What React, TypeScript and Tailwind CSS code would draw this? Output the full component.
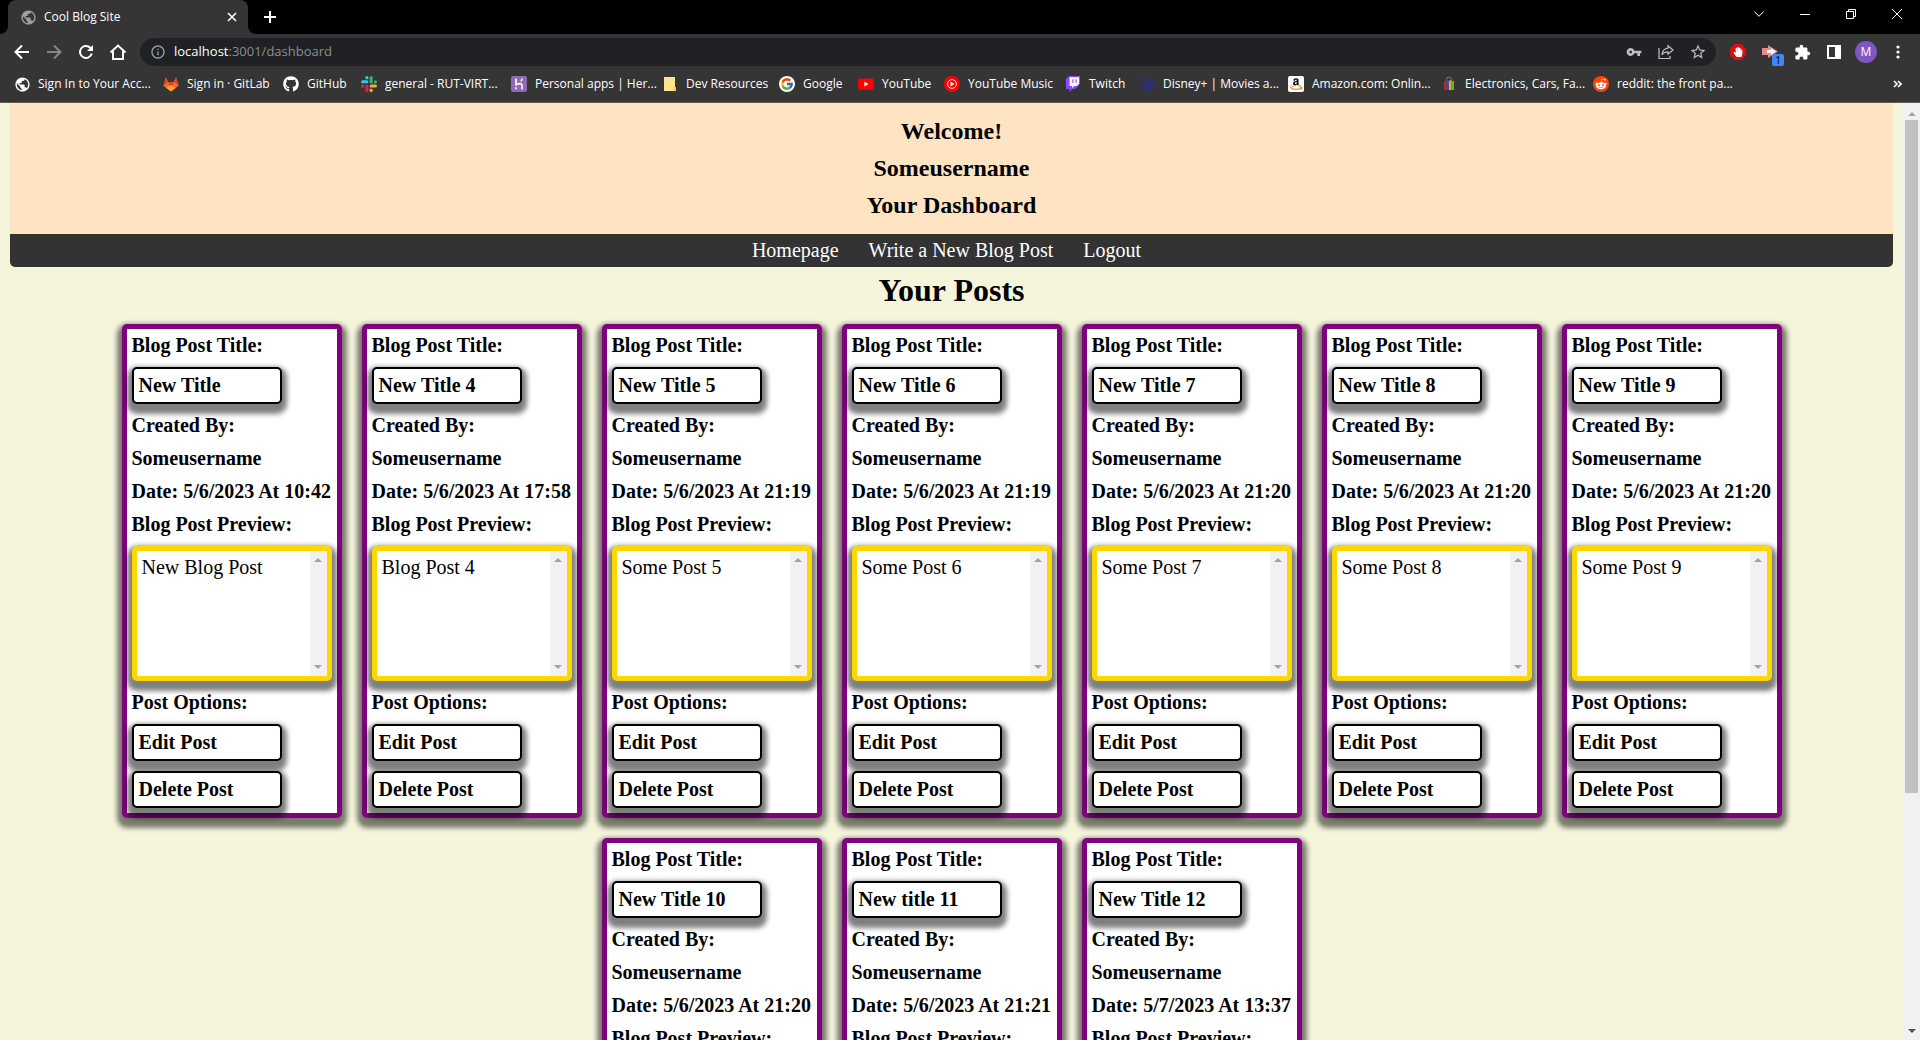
import React from "react";
import { FcGoogle } from "react-icons/fc";
import { FaAmazon, FaGithub, FaRedditAlien, FaHandPaper } from "react-icons/fa";
import {
  MdPublic,
  MdInfoOutline,
  MdVpnKey,
  MdStarBorder,
  MdExtension,
} from "react-icons/md";

const SHADOW = "shadow-[0_5px_5px_5px_rgba(0,0,0,0.5)]";
const SLOT = "flex size-4 shrink-0 items-center justify-center";

function GitLabIcon() {
  return (
    <svg viewBox="0 0 16 16" className="size-4" aria-hidden="true">
      <path d="M8 15.4 0.4 9.8 3 1.2 5.2 6h5.6L13 1.2l2.6 8.6z" fill="#fc6d26" />
      <path d="M8 15.4 5.2 6h5.6z" fill="#e24329" />
      <path d="M3 1.2 0.8 8 0.4 9.8 5.2 6zM13 1.2 15.2 8l.4 1.8L10.8 6z" fill="#e24329" />
      <path d="M8 15.4 3.4 12 8 9l4.6 3z" fill="#fca326" />
    </svg>
  );
}

function SlackIcon() {
  return (
    <svg viewBox="0 0 16 16" className="size-4" aria-hidden="true">
      <g fill="#36c5f0">
        <rect x="0" y="4.2" width="7.4" height="3" rx="1.5" />
        <path d="M7.4 3.2H5.8A1.6 1.6 0 1 1 7.4 1.6z" />
      </g>
      <g fill="#2eb67d">
        <rect x="8.6" y="0" width="3" height="7.4" rx="1.5" />
        <path d="M12.8 7.4V5.8a1.6 1.6 0 1 1 1.6 1.6z" />
      </g>
      <g fill="#ecb22e">
        <rect x="8.6" y="8.6" width="7.4" height="3" rx="1.5" />
        <path d="M8.6 12.8h1.6a1.6 1.6 0 1 1-1.6 1.6z" />
      </g>
      <g fill="#e01e5a">
        <rect x="4.4" y="8.6" width="3" height="7.4" rx="1.5" />
        <path d="M3.2 8.6v1.6a1.6 1.6 0 1 1-1.6-1.6z" />
      </g>
    </svg>
  );
}

function HerokuIcon() {
  return (
    <svg viewBox="0 0 16 16" className="size-4" aria-hidden="true">
      <rect width="16" height="16" rx="2" fill="#8f6bb3" />
      <path d="M5 2.5v6.2c3-1.4 6-1.6 6 .6v4.2" fill="none" stroke="#fff" strokeWidth="1.6" />
      <path d="M11 2.5c0 1.2-.5 2.1-1.2 2.9" fill="none" stroke="#fff" strokeWidth="1.4" />
      <path d="M4.3 10.6 6.3 12.2l-2 1.6z" fill="#fff" />
    </svg>
  );
}

function FolderIcon() {
  return (
    <svg viewBox="0 0 16 16" className="size-4" aria-hidden="true">
      <path d="M2 1h11v10h1v4H2z" fill="#ffe58f" />
      <path d="M11.5 11H14v4h-2.5z" fill="#f5cf5a" />
    </svg>
  );
}

function GoogleIcon() {
  return (
    <span className="flex size-4 items-center justify-center rounded-full bg-white">
      <FcGoogle size={14} />
    </span>
  );
}

function YouTubeIcon() {
  return (
    <svg viewBox="0 0 16 16" className="size-4" aria-hidden="true">
      <rect x="0" y="2.4" width="16" height="11.4" rx="2.8" fill="#f00" />
      <path d="M6.4 5.8v4.6L10.4 8.1z" fill="#fff" />
    </svg>
  );
}

function YouTubeMusicIcon() {
  return (
    <svg viewBox="0 0 16 16" className="size-4" aria-hidden="true">
      <circle cx="8" cy="8" r="8" fill="#f00" />
      <circle cx="8" cy="8" r="4.4" fill="none" stroke="#fff" strokeWidth="0.9" />
      <path d="M6.5 5.6v4.8L10.4 8z" fill="#fff" />
    </svg>
  );
}

function TwitchIcon() {
  return (
    <svg viewBox="0 0 16 16" className="size-4" aria-hidden="true">
      <path d="M4 0 1 3v10h3.4v3l3-3H10l5-5V0z" fill="#9146ff" />
      <path d="M4.6 1.2H14v6.4L11.8 10H9.2l-2 2v-2H4.6z" fill="#fff" />
      <path d="M7.3 3.2h1.2v3.6H7.3zM10.5 3.2h1.2v3.6h-1.2z" fill="#9146ff" />
    </svg>
  );
}

function DisneyIcon() {
  return (
    <svg viewBox="0 0 16 16" className="size-4" aria-hidden="true" fill="none" stroke="#2a2aa8" strokeLinecap="round">
      <path d="M1.5 4C6 1.6 14.5 4.5 14.8 9c.2 3-4 4.6-7 4-2.6-.5-4-2-3.5-3.5C5 7.8 8.5 7.6 10.5 9" strokeWidth="1.7" />
      <path d="M8 7v5" strokeWidth="1.7" />
    </svg>
  );
}

function AmazonIcon() {
  return (
    <svg viewBox="0 0 16 16" className="size-4" aria-hidden="true">
      <rect width="16" height="16" rx="2" fill="#fff" />
      <svg x="2.5" y="1" width="11" height="11" viewBox="0 0 448 400">
        <FaAmazon color="#000" size={448} />
      </svg>
      <rect y="10.6" width="16" height="4" fill="#fff" />
      <path d="M2.2 11.2c3.4 2.8 8.4 2.9 11.2.6M11.6 11.2l2.1.2-.4 2" fill="none" stroke="#f90" strokeWidth="1.3" />
    </svg>
  );
}

function EbayIcon() {
  return (
    <svg viewBox="0 0 16 16" className="size-4" aria-hidden="true">
      <path d="M5.5 5V3.5a2.5 2.5 0 0 1 5 0V5" fill="none" stroke="#777" />
      <path d="M3 5h2.5v9H3z" fill="#c4262e" />
      <path d="M5.5 4.5H8V14H5.5z" fill="#3a4fa8" />
      <path d="M8 4.5h2.5V14H8z" fill="#e0b01c" />
      <path d="M10.5 5H13v9h-2.5z" fill="#7fa82a" />
    </svg>
  );
}

function RedditIcon() {
  return (
    <span className="flex size-4 items-center justify-center rounded-full bg-[#ff4500] text-white">
      <FaRedditAlien size={12} />
    </span>
  );
}

const bookmarks = [
  { label: "Sign In to Your Acc...", icon: <MdPublic size={17} color="#fff" />, width: "w-[149px]" },
  { label: "Sign in · GitLab", icon: <GitLabIcon />, width: "w-[120px]" },
  { label: "GitHub", icon: <FaGithub size={16} color="#fff" />, width: "w-[78px]" },
  { label: "general - RUT-VIRT...", icon: <SlackIcon />, width: "w-[150px]" },
  { label: "Personal apps | Her...", icon: <HerokuIcon />, width: "w-[151px]" },
  { label: "Dev Resources", icon: <FolderIcon />, width: "w-[117px]" },
  { label: "Google", icon: <GoogleIcon />, width: "w-[79px]" },
  { label: "YouTube", icon: <YouTubeIcon />, width: "w-[86px]" },
  { label: "YouTube Music", icon: <YouTubeMusicIcon />, width: "w-[121px]" },
  { label: "Twitch", icon: <TwitchIcon />, width: "w-[74px]" },
  { label: "Disney+ | Movies a...", icon: <DisneyIcon />, width: "w-[149px]" },
  { label: "Amazon.com: Onlin...", icon: <AmazonIcon />, width: "w-[153px]" },
  { label: "Electronics, Cars, Fa...", icon: <EbayIcon />, width: "w-[152px]" },
  { label: "reddit: the front pa...", icon: <RedditIcon />, width: "w-[150px]" },
];

function TabStrip() {
  return (
    <div className="flex h-[34px] items-end bg-black pl-2">
      <div className="relative flex h-[34px] w-60 items-center rounded-t-lg bg-[#353535] pr-2 pl-3">
        <span className={SLOT}>
          <MdPublic size={17} color="#9aa0a6" className="shrink-0" />
        </span>
        <span className="ml-2 grow">Cool Blog Site</span>
        <button aria-label="Close tab" className={SLOT}>
          <svg viewBox="0 0 10 10" className="size-2.5" stroke="#fff" strokeWidth="1.6">
            <path d="M1 1l8 8M9 1l-8 8" />
          </svg>
        </button>
        <svg viewBox="0 0 8 8" className="absolute bottom-0 -left-2 size-2" aria-hidden="true">
          <path d="M8 0v8H0a8 8 0 0 0 8-8z" fill="#353535" />
        </svg>
        <svg viewBox="0 0 8 8" className="absolute -right-2 bottom-0 size-2" aria-hidden="true">
          <path d="M0 0v8h8a8 8 0 0 1-8-8z" fill="#353535" />
        </svg>
      </div>
      <button aria-label="New tab" className="ml-4 self-center">
        <svg viewBox="0 0 12 12" className="size-3" stroke="#fff" strokeWidth="2">
          <path d="M6 0v12M0 6h12" />
        </svg>
      </button>
      <div className="ml-auto flex h-7 self-start text-white">
        <button aria-label="Search tabs" className="flex w-[46px] items-center justify-center">
          <svg viewBox="0 0 10 6" className="h-1.5 w-2.5" fill="none" stroke="currentColor">
            <path d="M.3.5 5 5.3 9.7.5" />
          </svg>
        </button>
        <button aria-label="Minimize" className="flex w-[46px] items-center justify-center">
          <span className="h-px w-2.5 bg-white" />
        </button>
        <button aria-label="Restore" className="flex w-[46px] items-center justify-center">
          <svg viewBox="0 0 10 10" className="size-2.5" fill="none" stroke="currentColor">
            <path d="M.5 2.5h7v7h-7zM2.5 2.5v-2h7v7h-2" />
          </svg>
        </button>
        <button aria-label="Close" className="flex w-[46px] items-center justify-center">
          <svg viewBox="0 0 10 10" className="size-2.5" fill="none" stroke="currentColor">
            <path d="M0 0l10 10M10 0L0 10" />
          </svg>
        </button>
      </div>
    </div>
  );
}

function Toolbar() {
  return (
    <div className="flex h-9 items-center bg-[#353535] pr-3.5 pl-3 text-white">
      <div className="flex w-32 gap-3">
        <button aria-label="Back">
          <svg viewBox="0 0 20 20" className="size-5" fill="none" stroke="currentColor" strokeWidth="2">
            <path d="M17 10H4.500M10 3.500 3.500 10l6.500 6.500" />
          </svg>
        </button>
        <button aria-label="Forward" className="text-[#868686]">
          <svg viewBox="0 0 20 20" className="size-5" fill="none" stroke="currentColor" strokeWidth="2">
            <path d="M3 10h12.500M10 3.500l6.500 6.500-6.500 6.500" />
          </svg>
        </button>
        <button aria-label="Reload">
          <svg viewBox="0 0 20 20" className="size-5" fill="none" stroke="currentColor" strokeWidth="2">
            <path d="M15.800 11.500A6 6 0 1 1 14.300 5.800L16 7.500" />
            <path d="M17 3v6h-6z" fill="currentColor" stroke="none" />
          </svg>
        </button>
        <button aria-label="Home">
          <svg viewBox="0 0 20 20" className="size-5" fill="none" stroke="currentColor" strokeWidth="2">
            <path d="M2.500 10.500 10 3.500l7.500 7M5 9v8h10V9" />
          </svg>
        </button>
      </div>
      <div className="flex h-7 grow items-center rounded-full bg-[#202124] px-2.5 text-[#bdc1c6]">
        <MdInfoOutline size={16} color="#9aa0a6" />
        <a href="#dashboard" className="ml-2 grow text-[13px] text-[#8a8d91]">
          <span className="text-white">localhost</span>:3001/dashboard
        </a>
        <div className="flex items-center gap-4">
          <button aria-label="Manage passwords" className={SLOT}><MdVpnKey size={16} /></button>
          <button aria-label="Share this page" className={SLOT}>
            <svg viewBox="0 0 16 16" className="size-4" fill="none" stroke="currentColor" strokeWidth="1.2">
              <path d="M1 4v10.5h11V12" />
              <path d="M10 1.8 15 6l-5 4.2V7.8c-3 0-4.8 1-6 3.2.3-3.8 2.5-6.4 6-6.8z" />
            </svg>
          </button>
          <button aria-label="Bookmark this page" className={SLOT}><MdStarBorder size={18} className="shrink-0" /></button>
        </div>
      </div>
      <div className="ml-3.5 flex items-center gap-4">
        <button aria-label="Ad blocker" className={SLOT}>
          <svg viewBox="0 0 16 16" className="size-4" aria-hidden="true">
            <path d="M4.7 0h6.6L16 4.7v6.6L11.3 16H4.7L0 11.3V4.7z" fill="#d8110f" />
            <FaHandPaper x="3" y="3" size={10} color="#fff" />
          </svg>
        </button>
        <button aria-label="Extension, 1 notification" className="relative size-4">
          <svg viewBox="0 0 16 16" className="size-4" aria-hidden="true">
            <path d="M0 4h6V1l10 6.5L6 14v-3H0z" fill="#e88a8a" />
            <path d="M5 6h4V4l5 3.5L9 11V9H5z" fill="#fff" />
          </svg>
          <span className="absolute top-2.5 left-2.5 flex size-3 items-center justify-center rounded-xs bg-[#4285f4] text-[10px] leading-3 text-black">1</span>
        </button>
        <button aria-label="Extensions" className={SLOT}><MdExtension size={17} className="shrink-0" /></button>
        <button aria-label="Side panel" className={SLOT}>
          <svg viewBox="0 0 14 14" className="size-3.5" aria-hidden="true">
            <path d="M0 0h14v14H0zM2 2v10h6V2z" fill="#fff" fillRule="evenodd" />
          </svg>
        </button>
        <button aria-label="Profile" className={SLOT}>
          <span className="flex size-[22px] shrink-0 items-center justify-center rounded-full bg-[#7e57c2]">M</span>
        </button>
        <button aria-label="Menu" className={SLOT}>
          <svg viewBox="0 0 16 16" className="size-4" fill="#fff" aria-hidden="true">
            <circle cx="8" cy="3" r="1.6" />
            <circle cx="8" cy="8" r="1.6" />
            <circle cx="8" cy="13" r="1.6" />
          </svg>
        </button>
      </div>
    </div>
  );
}

function BookmarksBar() {
  return (
    <nav aria-label="Bookmarks" className="flex h-[33px] items-center border-b border-[#5c5c5c] bg-[#353535] pr-[18px] pb-1 pl-3.5">
      {bookmarks.map((b) => (
        <a key={b.label} href="#bookmark" className={`flex shrink-0 items-center gap-2 whitespace-nowrap ${b.width}`}>
          <span className="w-4 shrink-0">{b.icon}</span>
          {b.label}
        </a>
      ))}
      <button aria-label="More bookmarks" className="ml-auto">
        <svg viewBox="0 0 9 8" className="h-2 w-[9px]" fill="none" stroke="#fff" strokeWidth="1.6">
          <path d="M1 1l3 3-3 3M5 1l3 3-3 3" />
        </svg>
      </button>
    </nav>
  );
}

type Post = { title: string; date: string; body: string };

const posts: Post[] = [
  { title: "New Title", date: "5/6/2023 At 10:42", body: "New Blog Post" },
  { title: "New Title 4", date: "5/6/2023 At 17:58", body: "Blog Post 4" },
  { title: "New Title 5", date: "5/6/2023 At 21:19", body: "Some Post 5" },
  { title: "New Title 6", date: "5/6/2023 At 21:19", body: "Some Post 6" },
  { title: "New Title 7", date: "5/6/2023 At 21:20", body: "Some Post 7" },
  { title: "New Title 8", date: "5/6/2023 At 21:20", body: "Some Post 8" },
  { title: "New Title 9", date: "5/6/2023 At 21:20", body: "Some Post 9" },
  { title: "New Title 10", date: "5/6/2023 At 21:20", body: "Some Post 10" },
  { title: "New title 11", date: "5/6/2023 At 21:21", body: "Some Post 11" },
  { title: "New Title 12", date: "5/7/2023 At 13:37", body: "Some Post 12" },
];

function Arrow({ up, className = "" }: { up?: boolean; className?: string }) {
  return (
    <svg viewBox="0 0 8 4" className={`h-1 w-2 shrink-0 ${className}`} fill="currentColor" aria-hidden="true">
      <path d={up ? "M4 0l4 4H0z" : "M0 0h8L4 4z"} />
    </svg>
  );
}

function PostCard({ post }: { post: Post }) {
  const box = `w-[150px] rounded-[5px] border-2 border-black bg-white p-[5px] text-left font-bold ${SHADOW}`;
  const id = `preview-${post.title.replaceAll(" ", "-")}`;
  return (
    <article className={`flex w-[220px] flex-col items-start gap-2.5 rounded-[5px] border-5 border-[#800080] bg-white p-[5px] font-bold whitespace-nowrap ${SHADOW}`}>
      <h2>Blog Post Title:</h2>
      <button className={box}>{post.title}</button>
      <p>Created By:</p>
      <p>Someusername</p>
      <p>Date: {post.date}</p>
      <label htmlFor={id}>Blog Post Preview:</label>
      <div className={`flex h-[135px] w-full rounded-[5px] border-5 border-[#ffd700] bg-white ${SHADOW}`}>
        <textarea
          id={id}
          readOnly
          defaultValue={post.body}
          className="min-w-0 grow resize-none overflow-hidden p-[5px] font-normal outline-none"
        />
        <div className="flex w-[17px] shrink-0 flex-col items-center justify-between bg-[#f1f1f1] py-[7px] text-[#a3a3a3]">
          <Arrow up />
          <Arrow />
        </div>
      </div>
      <p>Post Options:</p>
      <button className={box}>Edit Post</button>
      <button className={box}>Delete Post</button>
    </article>
  );
}

export default function App() {
  return (
    <div className="flex h-screen flex-col overflow-hidden bg-[#f5f5dc]">
      <header className="shrink-0 font-['Open_Sans','Noto_Sans',sans-serif] text-xs text-white">
        <TabStrip />
        <Toolbar />
        <BookmarksBar />
      </header>
      <div className="flex min-h-0 grow">
        <main className="min-w-0 grow overflow-hidden px-2.5 font-['Liberation_Serif','Times_New_Roman',serif] text-xl leading-[23px] text-black">
          <header className="flex flex-col gap-2.5 bg-[#ffe4c4] py-[15px] text-center text-2xl leading-[27px] font-bold">
            <h2>Welcome!</h2>
            <h2>Someusername</h2>
            <h2>Your Dashboard</h2>
          </header>
          <nav className="flex justify-center gap-5 rounded-b-[5px] bg-[#333] p-[5px] text-white">
            <a href="#home" className="mr-2.5">Homepage</a>
            <a href="#write" className="mr-2.5">Write a New Blog Post</a>
            <a href="#logout" className="mr-2.5">Logout</a>
          </nav>
          <h1 className="mt-[5px] mb-[15px] text-center text-[32px] leading-[37px] font-bold">Your Posts</h1>
          <section className="flex flex-wrap justify-center gap-5">
            {posts.map((p) => (
              <PostCard key={p.title} post={p} />
            ))}
          </section>
        </main>
        <div className="flex w-[17px] shrink-0 flex-col items-center bg-[#f1f1f1] py-[7px] text-[#505050]">
          <Arrow up className="mt-0.5 mb-1 text-[#a3a3a3]" />
          <div className="flex w-[13px] grow flex-col">
            <div className="h-[74%] bg-[#c1c1c1]" />
          </div>
          <Arrow />
        </div>
      </div>
    </div>
  );
}
